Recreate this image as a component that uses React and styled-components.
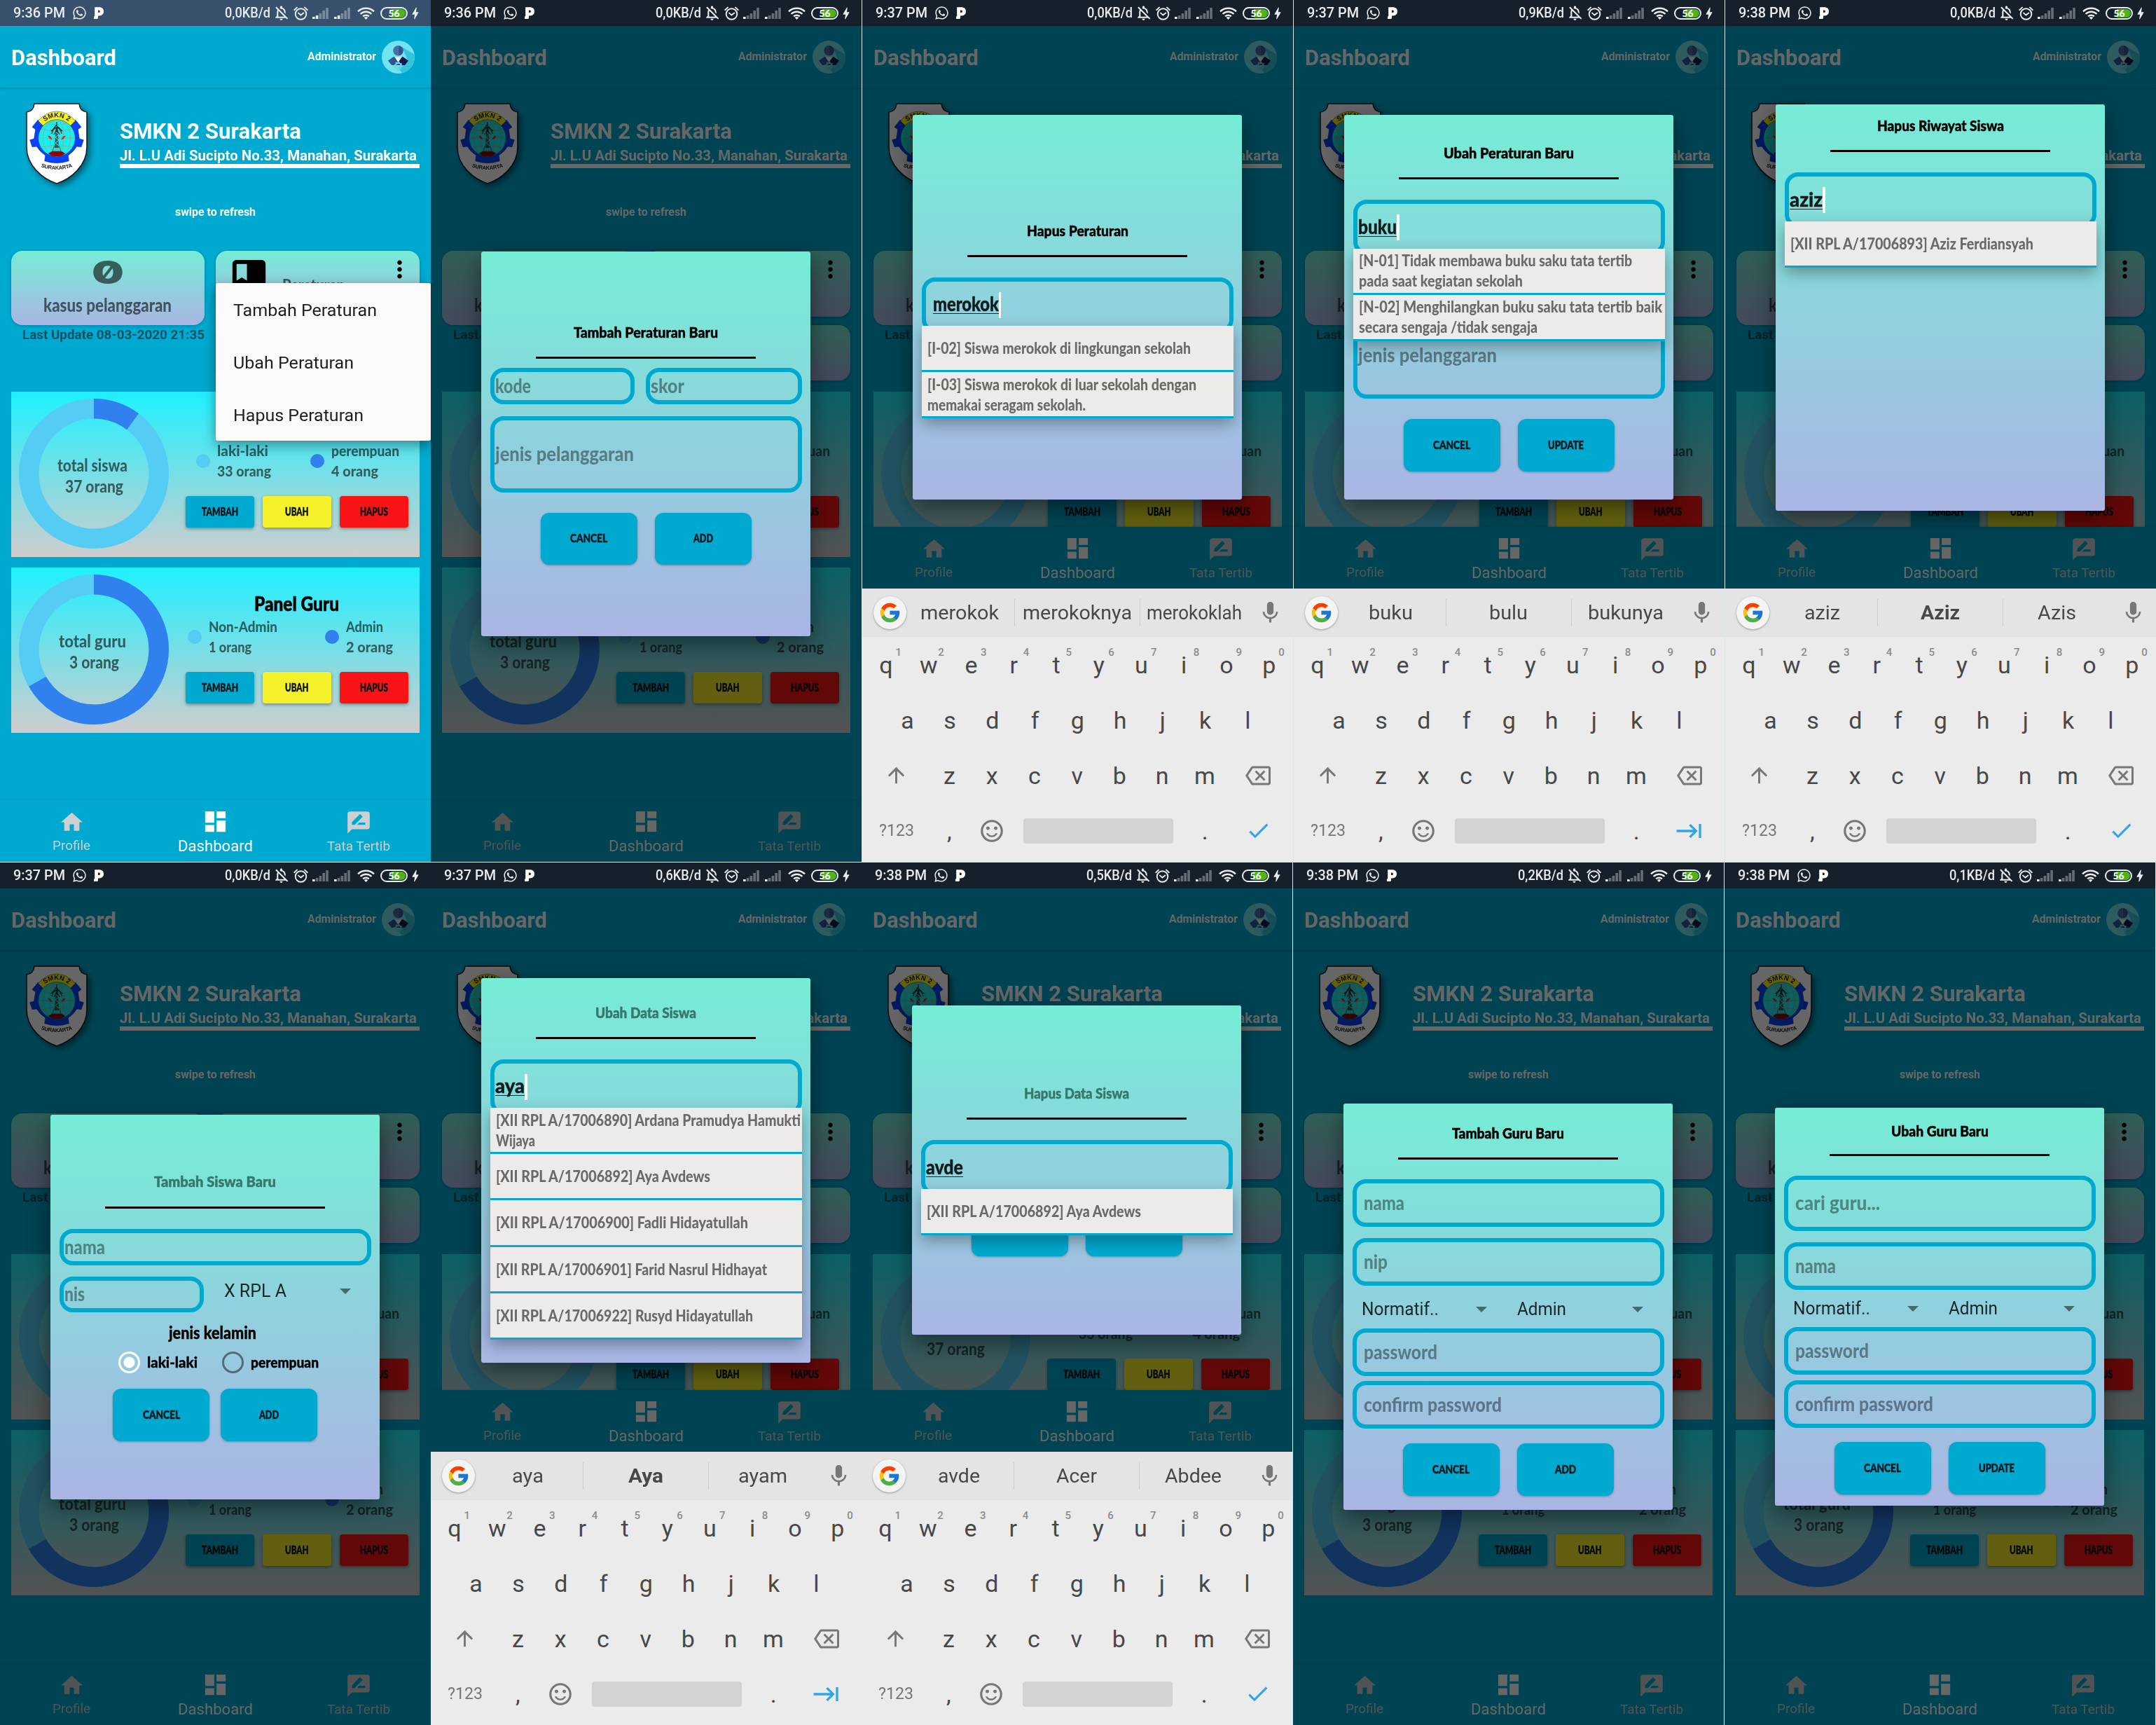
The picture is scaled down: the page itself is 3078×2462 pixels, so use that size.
import React, { useLayoutEffect, useRef, useState } from "react";
import styled, { createGlobalStyle, css } from "styled-components";
import {
  MdHome, MdDashboard, MdRateReview, MdClass, MdMoreVert, MdMic, MdArrowUpward,
  MdOutlineBackspace, MdSentimentSatisfiedAlt, MdCheck, MdKeyboardTab,
  MdOutlineNotificationsOff, MdBolt,
} from "react-icons/md";
import { FaWhatsapp } from "react-icons/fa";
import { FcGoogle } from "react-icons/fc";

const cyan = "#00a9cf";
const hand = `"Lato", "Open Sans", sans-serif`;
const ui = `Roboto, "Noto Sans", sans-serif`;
const muted = "rgba(0, 0, 0, 0.58)";

const Global = createGlobalStyle`
  *, *::before, *::after { box-sizing: border-box; }
  body { margin: 0; background: #fff; font-family: ${ui}; }
  svg { display: block; flex: none; }
`;

/* Text set to a fixed measure: the ink is condensed or widened to fill it. */
const FitBox = styled.span`
  display: inline-block;
  vertical-align: top;
  width: ${(p) => p.$w}px;
  white-space: nowrap;
  text-align: left;
`;
const FitInk = styled.span`
  display: inline-block;
  transform-origin: 0 50%;
`;
function Fit({ w, children }) {
  const ref = useRef(null);
  const [k, setK] = useState(1);
  useLayoutEffect(() => {
    const el = ref.current;
    el.style.transform = "none";
    const next = w / el.getBoundingClientRect().width;
    el.style.transform = `scaleX(${next})`;
    setK(next);
  }, [w, children]);
  return (
    <FitBox $w={w}>
      <FitInk ref={ref} style={{ transform: `scaleX(${k})` }}>{children}</FitInk>
    </FitBox>
  );
}

/* ---------- wall of phones ---------- */
const Wall = styled.main`
  width: 3078px;
  height: 2462px;
  display: grid;
  grid-template-rows: 1230px 1231px;
  row-gap: 1px;
  background: #dfe6e8;
  overflow: hidden;
`;
const Strip = styled.div`
  display: grid;
  grid-template-columns: ${(p) => p.$cols};
`;
const Phone = styled.section`
  position: relative;
  width: 615px;
  height: 100%;
  overflow: hidden;
  display: flex;
  flex-direction: column;
  background: ${cyan};
`;

/* ---------- status bar ---------- */
const Status = styled.div`
  flex: none;
  height: 37px;
  padding: 0 11px 0 19px;
  display: flex;
  align-items: center;
  background: ${(p) => (p.$dark ? "#16202b" : "#37506b")};
  color: #e9ecee;
  font-size: 19.5px;
  font-weight: 500;
  line-height: 38px;
`;
const StatusLeft = styled.div`
  flex: 1;
  display: flex;
  align-items: center;
  gap: 10px;
`;
const StatusRight = styled.div`
  display: flex;
  align-items: center;
`;
const Slot = styled.span`
  display: flex;
  margin-left: ${(p) => p.$l}px;
`;
const Battery = styled.span`
  width: 39px;
  height: 18px;
  margin-left: 8px;
  border: 2px solid #e9ecee;
  border-radius: 9px;
  padding: 1px;
  background: linear-gradient(90deg, transparent 40%, #4db41c 40%) content-box;
  display: flex;
  align-items: center;
  justify-content: center;
  font: 900 14px/12px ${hand};
  color: #fff;
  overflow: hidden;
`;
const Signal = ({ lit }) => (
  <svg width="24" height="17" viewBox="0 0 24 17">
    {[3, 5, 8, 12, 16].map((h, i) => (
      <rect key={i} x={i * 4.8} y={17 - h} width="3.6" height={h} fill="#e9ecee" opacity={i < lit ? 1 : 0.38} />
    ))}
  </svg>
);
const Alarm = () => (
  <svg width="21" height="20" viewBox="0 0 21 20" fill="none" stroke="#e9ecee" strokeWidth="1.9" strokeLinecap="round">
    <circle cx="10.5" cy="11" r="7.8" />
    <path d="M1.2 5.2 5 1.6M19.8 5.2 16 1.6M7 9.6l3.5 3 3.8-3" />
  </svg>
);
const Wifi = () => (
  <svg width="25" height="18" viewBox="0 0 25 18" fill="none" stroke="#e9ecee" strokeWidth="2.4">
    <path d="M1 6.4a16.4 16.4 0 0 1 23 0M4.6 10a11.4 11.4 0 0 1 15.8 0M8.2 13.4a6.3 6.3 0 0 1 8.6 0" />
    <path d="M12.5 18 9.8 15.2a4 4 0 0 1 5.4 0z" fill="#e9ecee" stroke="none" />
  </svg>
);
const PandoraMark = () => (
  <svg width="14" height="17" viewBox="0 0 14 17">
    <path fillRule="evenodd" fill="#fff" d="M1.200 0.200H7.400C11.500 0.200 14 2.500 14 6.200 14 10.200 11.300 12.400 7.600 12.400H6v3.200Q6 17 4.600 17H0V13.500H1.200zM6 4.600v3.500h1.200q1.800-.1 1.800-1.800t-1.800-1.700z" />
  </svg>
);

function StatusBar({ time, net, dark }) {
  return (
    <Status $dark={dark}>
      <StatusLeft>
        <Fit w={74}>{time}</Fit>
        <FaWhatsapp size={21} />
        <PandoraMark />
      </StatusLeft>
      <StatusRight>
        <Fit w={65}>{net}</Fit>
        <Slot $l={3}><MdOutlineNotificationsOff size={25} /></Slot>
        <Slot $l={5}><Alarm /></Slot>
        <Slot $l={6}><Signal lit={dark ? 1 : 2} /></Slot>
        <Slot $l={7}><Signal lit={dark ? 1 : 2} /></Slot>
        <Slot $l={9}><Wifi /></Slot>
        <Battery>56</Battery>
        <Slot $l={0}><MdBolt size={22} /></Slot>
      </StatusRight>
    </Status>
  );
}

/* ---------- app bar ---------- */
const Bar = styled.header`
  flex: none;
  height: 88px;
  padding: 0 23px 0 16px;
  display: flex;
  align-items: center;
  color: #fff;
  font-weight: 700;
  box-shadow: 0 1px 4px rgba(0, 0, 0, 0.22);
`;
const BarTitle = styled.h1`
  flex: 1;
  margin: 3px 0 0;
  font-size: 31px;
  line-height: 40px;
`;
const BarUser = styled.span`
  font-size: 16px;
  line-height: 42px;
  margin-right: 8px;
`;
const Avatar = () => (
  <svg width="47" height="47" viewBox="0 0 47 47">
    <defs><clipPath id="av"><circle cx="23.500" cy="23.500" r="23.500" /></clipPath></defs>
    <g clipPath="url(#av)">
      <rect width="47" height="47" fill="#72e3f1" />
      <path d="M29 9 47 20v27H30L23 39l14-11z" fill="#37c3d9" />
      <path d="M23.500 7a7.300 7.300 0 0 0 0 14.600z" fill="#4a6da4" />
      <path d="M23.500 7a7.300 7.300 0 0 1 0 14.600z" fill="#36558e" />
      <path d="M9 28.500 17 23l6.500 3.500V35H14z" fill="#2f5590" />
      <path d="M38 28.500 30 23l-6.500 3.500V35H33z" fill="#101c50" />
      <path d="M18.500 23.500h10L23.500 31z" fill="#e9f6fa" />
      <circle cx="23.500" cy="36" r="4" fill="none" stroke="#62dcec" strokeWidth="2" />
      <circle cx="23.500" cy="36" r="5.200" fill="none" stroke="#62dcec" strokeWidth="1.800" strokeDasharray="2 2" />
    </g>
  </svg>
);

/* ---------- dashboard body ---------- */
const Body = styled.div`
  flex: 1;
  min-height: 0;
  overflow: hidden;
  padding: 0 16px;
`;
const School = styled.div`
  height: 162px;
  display: flex;
`;
const Crest = styled.div`
  width: 155px;
  padding: 22px 0 0 21px;
  filter: drop-shadow(4px 4px 4px rgba(0, 0, 0, 0.45));
`;
const SchoolText = styled.div`
  flex: 1;
  padding-top: 45px;
  color: #fff;
  font-weight: 700;
`;
const SchoolName = styled.div`
  font-size: 30.5px;
  line-height: 36px;
`;
const SchoolAddress = styled.div`
  margin-top: 5px;
  font-size: 20px;
  line-height: 23px;
  border-bottom: 6.5px solid #fff;
`;
const Refresh = styled.div`
  margin: 6px 0 45px;
  text-align: center;
  color: #fff;
  font-weight: 700;
  font-size: 16px;
  line-height: 20px;
`;
const Cards = styled.div`
  display: grid;
  grid-template-columns: 275.5px 291px;
  column-gap: 16.5px;
  height: 185px;
`;
const CardColumn = styled.div`
  display: flex;
  flex-direction: column;
  gap: ${(p) => p.$gap}px;
`;
const Card = styled.div`
  height: ${(p) => p.$h}px;
  border-radius: 16px;
  background: linear-gradient(#76ecd6, #aab5e4);
  box-shadow: 0 1px 4px rgba(0, 0, 0, 0.25);
  color: ${muted};
  font-family: ${hand};
  font-weight: 900;
`;
const CaseCard = styled(Card)`
  display: flex;
  flex-direction: column;
  align-items: center;
  padding-top: 12px;
  font-size: 26px;
  line-height: 30px;
`;
const CaseCount = styled.span`
  height: 35px;
  margin-bottom: 15px;
  font: 900 46px/36px Inter, sans-serif;
  font-feature-settings: "zero" 1;
`;
const RuleCard = styled(Card)`
  display: flex;
  align-items: flex-start;
  padding: 7px 9px 0 12px;
  font-size: 23px;
  line-height: 30px;
`;
const RuleName = styled.span`
  flex: 1;
  padding: 26px 0 0 12px;
`;
const Updated = styled.div`
  text-align: right;
  font-size: 18.5px;
  font-weight: 700;
  line-height: 22px;
  color: rgba(0, 0, 0, 0.52);
`;

const Panel = styled.section`
  height: 235.5px;
  margin-top: ${(p) => p.$mt}px;
  display: grid;
  grid-template-columns: 249px 317.5px;
  background: linear-gradient(#1ff0ff, #cfcdcd);
  font-family: ${hand};
  font-weight: 900;
  color: ${muted};
`;
const Ring = styled.div`
  position: relative;
  padding: 10.3px 0 0 10.5px;
`;
const RingLabel = styled.div`
  position: absolute;
  inset: 90px 18px auto 0;
  text-align: center;
  font-size: 24px;
  line-height: 29.5px;
`;
const RingLine = styled.div`
  padding-left: ${(p) => p.$dx}px;
`;
const PanelTitle = styled.h2`
  margin: 34px 0 0;
  text-align: center;
  font-size: 28px;
  font-weight: 900;
  line-height: 34px;
  color: #000;
  -webkit-text-stroke: 0.6px #000;
`;
const Legend = styled.div`
  display: grid;
  grid-template-columns: ${(p) => p.$cols};
  align-items: center;
  margin: 2px 0 22px;
  font-size: 21.5px;
  line-height: 28.5px;
`;
const Dot = styled.i`
  width: 20px;
  height: 20px;
  border-radius: 50%;
  justify-self: end;
  margin-right: 10px;
  background: ${(p) => p.$c};
`;
const Actions = styled.div`
  display: flex;
  justify-content: space-between;
`;
const Action = styled.button`
  width: 98px;
  height: 44.5px;
  padding: 0;
  border: 0;
  border-radius: 4px;
  background: ${(p) => p.$c};
  box-shadow: 0 2px 4px rgba(0, 0, 0, 0.35);
  font: 900 16.5px/43px ${hand};
  color: #0d1214;
  -webkit-text-stroke: 0.5px #0d1214;
`;

function Donut({ share }) {
  const r = 92.75;
  const c = 2 * Math.PI * r;
  return (
    <svg width="214" height="214" viewBox="-107 -107 214 214">
      <g fill="none" strokeWidth="28.500" transform="rotate(-90)">
        <circle r={r} stroke="#55ccf3" />
        <circle r={r} stroke="#3080ed" strokeDasharray={`${c * share} ${c}`} />
      </g>
    </svg>
  );
}

function StatPanel({ mt, share, ring, title, cols, legend }) {
  return (
    <Panel $mt={mt}>
      <Ring>
        <Donut share={share} />
        <RingLabel>
          {ring.map(([t, w, dx]) => <RingLine key={t} $dx={dx}><Fit w={w}>{t}</Fit></RingLine>)}
        </RingLabel>
      </Ring>
      <div>
        <PanelTitle><Fit w={title[1]}>{title[0]}</Fit></PanelTitle>
        <Legend $cols={cols}>
          {legend.map(([c, a, aw, b, bw]) => (
            <React.Fragment key={a}>
              <Dot $c={c} />
              <span><Fit w={aw}>{a}</Fit><br /><Fit w={bw}>{b}</Fit></span>
            </React.Fragment>
          ))}
        </Legend>
        <Actions>
          <Action $c={cyan}><Fit w={52}>TAMBAH</Fit></Action>
          <Action $c="#f4f12a"><Fit w={33.5}>UBAH</Fit></Action>
          <Action $c="#f81414"><Fit w={40}>HAPUS</Fit></Action>
        </Actions>
      </div>
    </Panel>
  );
}

function CrestArt({ id }) {
  return (
    <svg width="88" height="117" viewBox="-1 -1 88 117">
      <defs>
        <path id={`top${id}`} d="M22 28.500Q43 10 64 28.500" />
        <path id={`low${id}`} d="M17 89Q43 99 69 89" />
      </defs>
      <path d="M11 0H75Q76 11 86 12V62C86 88 64 107 43 114 22 107 0 88 0 62V12Q10 11 11 0z" fill="#fff" stroke="#10151a" strokeWidth="1.500" />
      <path transform="translate(-18 -18.300) scale(0.3333)" fill="#0643fb" stroke="#08206a" strokeWidth="1.500"
        d="M103 124 78 155 92 165 86 205 68 210 78 240 97 238Q112 262 134 276L131 300Q183 318 235 300L232 276Q254 262 269 238L288 240 298 210 280 205 274 165 288 155 263 124 238 150Q183 110 128 150z" />
      <path d="M16.500 24.500Q28 11 43 11T69.500 24.500L61 33Q54 23 43 23T25 33z" fill="#f7f41c" stroke="#333" strokeWidth="0.500" />
      <circle cx="43" cy="49" r="26.300" fill="#12f1f3" stroke="#2b4a55" strokeWidth="0.600" />
      <g fill="none" stroke="#a3a584" strokeWidth="0.900">
        <ellipse cx="43" cy="49" rx="10" ry="26" />
        <ellipse cx="43" cy="49" rx="19.500" ry="26" />
        <path d="M17 49H69M20.500 36Q43 42 65.500 36M20.500 62Q43 57 65.500 62M28 28Q43 32 58 28" />
      </g>
      <path d="M31 71Q43 62 55 71 50 75.500 43 75.500T31 71z" fill="#8e0505" />
      <path d="M39 61h8l2 7H37z" fill="#3fd0cf" stroke="#1f5a5a" strokeWidth="0.800" />
      <path d="M41.500 33h3l1.500 30h-6z" fill="#27605e" />
      <path d="M41 40l5 4-5 4 5 4-5 4 5 4" fill="none" stroke="#8fe0da" strokeWidth="0.900" />
      <path d="M43 26v14M36 43q1-7 7-9 6 2 7 9M38 36l4-5 6 5M35 39l6-5M51 39l-6-5M39 44l4-7 4 7" fill="none" stroke="#1b3231" strokeWidth="1.300" />
      <path d="M30 45.500l4 1 3 5-4-1.500zM56 45.500l-4 1-3 5 4-1.500z" fill="#f01c14" />
      <g fontFamily="Liberation Sans, sans-serif" fontWeight="700" fill="#111">
        <text fontSize="9.500" textAnchor="middle"><textPath href={`#top${id}`} startOffset="50%" textLength="37">SMKN 2</textPath></text>
        <text fontSize="7.500" textAnchor="middle"><textPath href={`#low${id}`} startOffset="50%" textLength="46">SURAKARTA</textPath></text>
      </g>
    </svg>
  );
}

/* ---------- bottom navigation ---------- */
const Nav = styled.nav`
  flex: none;
  height: 88px;
  display: flex;
  background: ${cyan};
  box-shadow: 0 -1px 3px rgba(0, 0, 0, 0.14);
`;
const NavItem = styled.div`
  flex: 1;
  display: flex;
  flex-direction: column;
  align-items: center;
  padding: ${(p) => (p.$on ? 11 : 13)}px 1px 0 0;
  color: ${(p) => (p.$on ? "#fff" : "#cdd0d1")};
  font-size: ${(p) => (p.$on ? 22 : 18.6)}px;
  line-height: 31px;
`;

/* ---------- overflow menu ---------- */
const Menu = styled.ul`
  position: absolute;
  left: 308px;
  top: 404px;
  width: 307px;
  height: 225px;
  margin: 0;
  padding: 1px 0 0 25px;
  list-style: none;
  background: #fafafa;
  border-radius: 3px;
  box-shadow: 0 6px 18px rgba(0, 0, 0, 0.4);
  color: #1e1e1e;
  font-size: 24.5px;
  line-height: 75px;
`;

/* ---------- keyboard ---------- */
const Board = styled.div`
  flex: none;
  height: 390px;
  background: #ebebeb;
  color: #484848;
`;
const Suggest = styled.div`
  height: 69px;
  padding: 0 13px 0 16px;
  display: grid;
  grid-template-columns: 47px 154px 178.6px 155.4px 13px 38px;
  align-items: center;
  background: #e4e4e4;
  font-size: 28px;
  line-height: 38px;
`;
const GoogleKey = styled.span`
  width: 47px;
  height: 47px;
  border-radius: 50%;
  display: grid;
  place-items: center;
  background: #f4f4f4;
  box-shadow: 0 1px 3px rgba(0, 0, 0, 0.35);
`;
const Word = styled.span`
  padding: 1px 3px 0 0;
  text-align: center;
  font-weight: ${(p) => (p.$bold ? 700 : 400)};
  & + & { border-left: 1.5px solid #cbcbcb; padding-right: 0; }
`;
const MicKey = styled.span`
  grid-column: 6;
  color: #777;
`;
const KeyRow = styled.div`
  height: 79px;
  padding: 0 ${(p) => p.$pad}px;
  display: flex;
  align-items: center;
`;
const Key = styled.span`
  position: relative;
  width: ${(p) => p.$w || 60.75}px;
  display: flex;
  justify-content: center;
  font-size: ${(p) => p.$fs || 34}px;
  line-height: 40px;
  color: ${(p) => p.$c || "inherit"};
`;
const Hint = styled.sup`
  position: absolute;
  left: 44px;
  top: -6px;
  font-size: 15px;
  font-weight: 500;
  line-height: 16px;
  color: #8b8b8b;
`;
const Space = styled.span`
  width: 214px;
  height: 36px;
  margin: 0 15px;
  border-radius: 4px;
  background: #d2d2d2;
`;

function Keyboard({ words, bold, tab }) {
  return (
    <Board>
      <Suggest>
        <GoogleKey><FcGoogle size={33} /></GoogleKey>
        {words.map(([t, w], i) => <Word key={t} $bold={bold && i === 1}><Fit w={w}>{t}</Fit></Word>)}
        <MicKey><MdMic size={37} /></MicKey>
      </Suggest>
      <KeyRow $pad={3.6}>
        {[..."qwertyuiop"].map((k, i) => <Key key={k}>{k}<Hint>{(i + 1) % 10}</Hint></Key>)}
      </KeyRow>
      <KeyRow $pad={34}>{[..."asdfghjkl"].map((k) => <Key key={k}>{k}</Key>)}</KeyRow>
      <KeyRow $pad={3}>
        <Key $w={91} $c="#777"><MdArrowUpward size={35} /></Key>
        {[..."zxcvbnm"].map((k) => <Key key={k}>{k}</Key>)}
        <Key $w={91} $c="#777"><MdOutlineBackspace size={36} /></Key>
      </KeyRow>
      <KeyRow $pad={3}>
        <Key $w={91} $fs={23} $c="#777"><Fit w={50}>?123</Fit></Key>
        <Key>,</Key>
        <Key $w={60} $c="#777"><MdSentimentSatisfiedAlt size={38} /></Key>
        <Space />
        <Key>.</Key>
        <Key $w={91} $c="#2fa4e7">{tab ? <MdKeyboardTab size={40} /> : <MdCheck size={37} />}</Key>
      </KeyRow>
    </Board>
  );
}

/* ---------- dialogs ---------- */
const Scrim = styled.div`
  position: absolute;
  inset: 37px 0 ${(p) => (p.$kb ? 390 : 0)}px;
  display: flex;
  align-items: center;
  justify-content: center;
  background: rgba(0, 0, 0, 0.6);
  overflow: hidden;
`;
const Sheet = styled.div`
  width: 470px;
  height: ${(p) => p.$h}px;
  margin-right: 1px;
  padding: ${(p) => p.$top}px 12.500px 0;
  border-radius: 3px;
  background: linear-gradient(#75edd6, #aab5e4);
  box-shadow: 0 10px 32px rgba(0, 0, 0, 0.45);
  font-family: ${hand};
  font-weight: 900;
`;
const Title = styled.h3`
  margin: 0 auto ${(p) => p.$gap ?? 29}px;
  width: 314px;
  padding-bottom: ${(p) => p.$pb ?? 20}px;
  border-bottom: 3px solid #000;
  text-align: center;
  font-size: 21.5px;
  font-weight: 900;
  line-height: 30px;
  color: ${(p) => (p.$soft ? "#38776b" : "#000")};
  -webkit-text-stroke: 0.5px ${(p) => (p.$soft ? "#38776b" : "#000")};
`;
const Row = styled.div`
  display: flex;
  gap: ${(p) => p.$gap || 0}px;
  margin-top: ${(p) => p.$mt || 0}px;
`;
const Field = styled.div`
  position: relative;
  width: ${(p) => p.$w || 445}px;
  height: ${(p) => p.$h}px;
  margin-top: ${(p) => p.$mt || 0}px;
  padding-left: ${(p) => p.$pl ?? 1.5}px;
  border: 6px solid ${cyan};
  border-radius: 19px;
  display: flex;
  align-items: center;
  font-size: 27.500px;
  line-height: 36px;
  color: rgba(0, 0, 0, 0.4);
`;
const Typed = styled.span`
  position: relative;
  top: -1px;
  color: #101c1e;
  font-size: 27.500px;
  line-height: 27px;
  border-bottom: 1.5px solid #101c1e;
  height: 28px;
  -webkit-text-stroke: 0.4px #101c1e;
`;
const Caret = styled.i`
  width: 3.500px;
  height: 37px;
  background: #fff;
`;
const Options = styled.ul`
  position: absolute;
  z-index: 1;
  left: -6px;
  top: 63.500px;
  width: 445px;
  margin: 0;
  padding: 0;
  list-style: none;
  background: #ecebea;
  box-shadow: 0 8px 20px rgba(0, 0, 0, 0.32);
`;
const Option = styled.li`
  height: 66.2px;
  padding-left: 8px;
  display: flex;
  flex-direction: column;
  justify-content: center;
  border-bottom: 3px solid ${cyan};
  font-size: 22px;
  line-height: 29px;
  color: #6b6a69;
`;
const Buttons = styled.div`
  display: flex;
  justify-content: center;
  gap: ${(p) => p.$gap || 25}px;
  margin-top: ${(p) => p.$mt}px;
`;
const Push = styled.button`
  width: 138px;
  height: 74.500px;
  padding: 0;
  border: 0;
  border-radius: 12px;
  background: ${cyan};
  box-shadow: 0 1px 3px rgba(0, 0, 0, 0.3);
  font: 900 16.500px/73px ${hand};
  color: #08171b;
  -webkit-text-stroke: 0.5px #08171b;
`;
const Spinner = styled.div`
  width: ${(p) => p.$w}px;
  display: flex;
  align-items: center;
  justify-content: space-between;
  font: 400 25px/30px ${ui};
  color: #17262b;
  &::after {
    content: "";
    border: 8px solid transparent;
    border-top-color: rgba(0, 0, 0, 0.5);
    border-bottom: 0;
  }
`;
const SpinnerText = styled.span`
  padding-left: ${(p) => (p.$tight ? 0 : 16)}px;
`;
const SpinnerRow = styled.div`
  display: flex;
  gap: ${(p) => p.$gap || 0}px;
  height: ${(p) => p.$h}px;
  padding: 1px 0 0 13px;
`;
const Group = styled.div`
  margin-top: 13px;
  padding-right: 8px;
  text-align: center;
  font-size: 25px;
  line-height: 30px;
  color: #000;
  -webkit-text-stroke: 0.4px #000;
`;
const Radios = styled.div`
  display: flex;
  align-items: center;
  margin: 12px 0 22px 84px;
  font-size: 21.500px;
  line-height: 32px;
  color: #000;
  -webkit-text-stroke: 0.4px #000;
`;
const Radio = styled.i`
  width: 31px;
  height: 31px;
  border-radius: 50%;
  margin: 0 10px 0 ${(p) => p.$ml || 0}px;
  border: 3px solid ${(p) => (p.$on ? "#fff" : "#536a7b")};
  ${(p) => p.$on && css`background: radial-gradient(circle, #fff 7.500px, transparent 8.500px);`}
`;

const Search = ({ text, w, caret = true, pl, options }) => (
  <Field $h={79} $pl={pl}>
    <Typed><Fit w={w}>{text}</Fit></Typed>
    {caret && <Caret />}
    <Options>
      {options.map((lines, i) => (
        <Option key={i}>{lines.map(([t, lw]) => <Fit key={t} w={lw}>{t}</Fit>)}</Option>
      ))}
    </Options>
  </Field>
);
const Confirm = ({ mt, gap, label, w }) => (
  <Buttons $mt={mt} $gap={gap}>
    <Push><Fit w={53}>CANCEL</Fit></Push>
    <Push><Fit w={w}>{label}</Fit></Push>
  </Buttons>
);

function AddRule() {
  return (
    <Sheet $h={549} $top={100}>
      <Title $gap={13}><Fit w={206}>Tambah Peraturan Baru</Fit></Title>
      <Row $gap={16}>
        <Field $w={206} $h={52}><Fit w={51}>kode</Fit></Field>
        <Field $w={223} $h={52}><Fit w={48}>skor</Fit></Field>
      </Row>
      <Field $h={109} $mt={16.5}><Fit w={198}>jenis pelanggaran</Fit></Field>
      <Confirm mt={29} label="ADD" w={28} />
    </Sheet>
  );
}
function DeleteRule() {
  return (
    <Sheet $h={549} $top={149.5}>
      <Title><Fit w={145}>Hapus Peraturan</Fit></Title>
      <Search text="merokok" w={94} pl={10} options={[
        [["[I-02] Siswa merokok di lingkungan sekolah", 376]],
        [["[I-03] Siswa merokok di luar sekolah dengan", 384], ["memakai seragam sekolah.", 226]],
      ]} />
    </Sheet>
  );
}
function EditRule() {
  return (
    <Sheet $h={549} $top={39}>
      <Title><Fit w={186}>Ubah Peraturan Baru</Fit></Title>
      <Search text="buku" w={55} options={[
        [["[N-01] Tidak membawa buku saku tata tertib", 390], ["pada saat kegiatan sekolah", 234]],
        [["[N-02] Menghilangkan buku saku tata tertib baik", 433], ["secara sengaja /tidak sengaja", 255]],
      ]} />
      <Field $h={125} $mt={80}><Fit w={198}>jenis pelanggaran</Fit></Field>
      <Confirm mt={29} label="UPDATE" w={51} />
    </Sheet>
  );
}
function DeleteHistory() {
  return (
    <Sheet $h={580} $top={15.5}>
      <Title><Fit w={181}>Hapus Riwayat Siswa</Fit></Title>
      <Search text="aziz" w={47} options={[[["[XII RPL A/17006893] Aziz Ferdiansyah", 347]]]} />
    </Sheet>
  );
}
function AddStudent() {
  return (
    <Sheet $h={549} $top={80.5}>
      <Title $soft $pb={21}><Fit w={174}>Tambah Siswa Baru</Fit></Title>
      <Field $h={51.5}><Fit w={58}>nama</Fit></Field>
      <Row $mt={16}>
        <Field $w={206} $h={51.5}><Fit w={29}>nis</Fit></Field>
        <SpinnerRow $h={41}><Spinner $w={197}><SpinnerText><Fit w={89}>X RPL A</Fit></SpinnerText></Spinner></SpinnerRow>
      </Row>
      <Group><Fit w={125}>jenis kelamin</Fit></Group>
      <Radios>
        <Radio $on /><Fit w={72}>laki-laki</Fit>
        <Radio $ml={35} /><Fit w={97}>perempuan</Fit>
      </Radios>
      <Confirm mt={0} gap={16} label="ADD" w={28} />
    </Sheet>
  );
}
function EditStudent() {
  return (
    <Sheet $h={549} $top={34}>
      <Title $soft><Fit w={144}>Ubah Data Siswa</Fit></Title>
      <Search text="aya" w={42} options={[
        [["[XII RPL A/17006890] Ardana Pramudya Hamukti", 435], ["Wijaya", 56]],
        [["[XII RPL A/17006892] Aya Avdews", 306]],
        [["[XII RPL A/17006900] Fadli Hidayatullah", 360]],
        [["[XII RPL A/17006901] Farid Nasrul Hidhayat", 387]],
        [["[XII RPL A/17006922] Rusyd Hidayatullah", 367]],
      ]} />
    </Sheet>
  );
}
function DeleteStudent() {
  return (
    <Sheet $h={470} $top={110}>
      <Title $soft><Fit w={150}>Hapus Data Siswa</Fit></Title>
      <Search text="avde" w={53} caret={false} options={[[["[XII RPL A/17006892] Aya Avdews", 306]]]} />
      <Buttons $mt={12}><Push /><Push /></Buttons>
    </Sheet>
  );
}
const RolePickers = () => (
  <>
    <Spinner $w={179.5}><SpinnerText $tight><Fit w={110}>Normatif..</Fit></SpinnerText></Spinner>
    <Spinner $w={180}><SpinnerText $tight><Fit w={70}>Admin</Fit></SpinnerText></Spinner>
  </>
);
function AddTeacher() {
  return (
    <Sheet $h={580} $top={26.5}>
      <Title $gap={28}><Fit w={160}>Tambah Guru Baru</Fit></Title>
      <Field $h={68} $pl={10}><Fit w={58}>nama</Fit></Field>
      <Field $h={68} $pl={10} $mt={16}><Fit w={34}>nip</Fit></Field>
      <Row $mt={7}><SpinnerRow $h={54} $gap={43}><RolePickers /></SpinnerRow></Row>
      <Field $h={68} $pl={10}><Fit w={105}>password</Fit></Field>
      <Field $h={68} $pl={10} $mt={7.5}><Fit w={197}>confirm password</Fit></Field>
      <Confirm mt={21} label="ADD" w={30} />
    </Sheet>
  );
}
function EditTeacher() {
  return (
    <Sheet $h={568} $top={18}>
      <Title $pb={18} $gap={27.5}><Fit w={139}>Ubah Guru Baru</Fit></Title>
      <Field $h={79} $pl={10}><Fit w={121}>cari guru...</Fit></Field>
      <Field $h={68} $pl={10} $mt={16}><Fit w={58}>nama</Fit></Field>
      <Row><SpinnerRow $h={53} $gap={43}><RolePickers /></SpinnerRow></Row>
      <Field $h={68} $pl={10}><Fit w={105}>password</Fit></Field>
      <Field $h={68} $pl={10} $mt={8}><Fit w={197}>confirm password</Fit></Field>
      <Confirm mt={20.5} label="UPDATE" w={51} />
    </Sheet>
  );
}

/* ---------- one phone ---------- */
function Screen({ id, time, net, dialog: Dialog, keyboard }) {
  return (
    <Phone>
      <StatusBar time={time} net={net} dark={!!Dialog} />
      <Bar>
        <BarTitle><Fit w={150}>Dashboard</Fit></BarTitle>
        <BarUser><Fit w={98}>Administrator</Fit></BarUser>
        <Avatar />
      </Bar>
      <Body>
        <School>
          <Crest><CrestArt id={id} /></Crest>
          <SchoolText>
            <SchoolName><Fit w={259}>SMKN 2 Surakarta</Fit></SchoolName>
            <SchoolAddress><Fit w={424}>Jl. L.U Adi Sucipto No.33, Manahan, Surakarta</Fit></SchoolAddress>
          </SchoolText>
        </School>
        <Refresh><Fit w={115}>swipe to refresh</Fit></Refresh>
        <Cards>
          <CardColumn $gap={3}>
            <CaseCard $h={106}>
              <CaseCount><Fit w={46}>0</Fit></CaseCount>
              <Fit w={183}>kasus pelanggaran</Fit>
            </CaseCard>
            <Updated><Fit w={260}>Last Update 08-03-2020 21:35</Fit></Updated>
          </CardColumn>
          <CardColumn $gap={12}>
            <RuleCard $h={94}>
              <MdClass size={71} color="#000" />
              <RuleName><Fit w={89}>Peraturan</Fit></RuleName>
              <MdMoreVert size={39} color="#000" />
            </RuleCard>
            <Card $h={79} />
          </CardColumn>
        </Cards>
        <StatPanel mt={16} share={4 / 37 - 0.006} title={["Panel Siswa", 132]}
          ring={[["total siswa", 100, 0], ["37 orang", 83, 6]]} cols="45px 133px 30px 1fr"
          legend={[["#55ccf3", "laki-laki", 73, "33 orang", 77], ["#3080ed", "perempuan", 97, "4 orang", 67]]} />
        <StatPanel mt={15.5} share={2 / 3} title={["Panel Guru", 121]}
          ring={[["total guru", 96, 0], ["3 orang", 71, 6]]} cols="33px 166px 30px 1fr"
          legend={[["#55ccf3", "Non-Admin", 98, "1 orang", 61], ["#3080ed", "Admin", 53, "2 orang", 67]]} />
      </Body>
      <Nav>
        <NavItem><MdHome size={37} /><Fit w={54}>Profile</Fit></NavItem>
        <NavItem $on><MdDashboard size={39} /><Fit w={107}>Dashboard</Fit></NavItem>
        <NavItem><MdRateReview size={38} /><Fit w={90}>Tata Tertib</Fit></NavItem>
      </Nav>
      {keyboard && <Keyboard {...keyboard} />}
      {Dialog
        ? <Scrim $kb={!!keyboard}><Dialog /></Scrim>
        : (
          <Menu>
            <li><Fit w={205}>Tambah Peraturan</Fit></li>
            <li><Fit w={172}>Ubah Peraturan</Fit></li>
            <li><Fit w={186}>Hapus Peraturan</Fit></li>
          </Menu>
        )}
    </Phone>
  );
}

const top = [
  { time: "9:36 PM", net: "0,0KB/d" },
  { time: "9:36 PM", net: "0,0KB/d", dialog: AddRule },
  { time: "9:37 PM", net: "0,0KB/d", dialog: DeleteRule, keyboard: { words: [["merokok", 112], ["merokoknya", 156], ["merokoklah", 136]] } },
  { time: "9:37 PM", net: "0,9KB/d", dialog: EditRule, keyboard: { words: [["buku", 63], ["bulu", 55], ["bukunya", 108]], tab: true } },
  { time: "9:38 PM", net: "0,0KB/d", dialog: DeleteHistory, keyboard: { words: [["aziz", 51], ["Aziz", 56], ["Azis", 55]], bold: true } },
];
const bottom = [
  { time: "9:37 PM", net: "0,0KB/d", dialog: AddStudent },
  { time: "9:37 PM", net: "0,6KB/d", dialog: EditStudent, keyboard: { words: [["aya", 45], ["Aya", 50], ["ayam", 70]], bold: true, tab: true } },
  { time: "9:38 PM", net: "0,5KB/d", dialog: DeleteStudent, keyboard: { words: [["avde", 60], ["Acer", 58], ["Abdee", 81]] } },
  { time: "9:38 PM", net: "0,2KB/d", dialog: AddTeacher },
  { time: "9:38 PM", net: "0,1KB/d", dialog: EditTeacher },
];

export default function App() {
  return (
    <>
      <Global />
      <Wall>
        <Strip $cols="615px 616px 616px 616px 615px">
          {top.map((s, i) => <Screen key={i} id={`a${i}`} {...s} />)}
        </Strip>
        <Strip $cols="615px 615px 616px 616px 616px">
          {bottom.map((s, i) => <Screen key={i} id={`b${i}`} {...s} />)}
        </Strip>
      </Wall>
    </>
  );
}
